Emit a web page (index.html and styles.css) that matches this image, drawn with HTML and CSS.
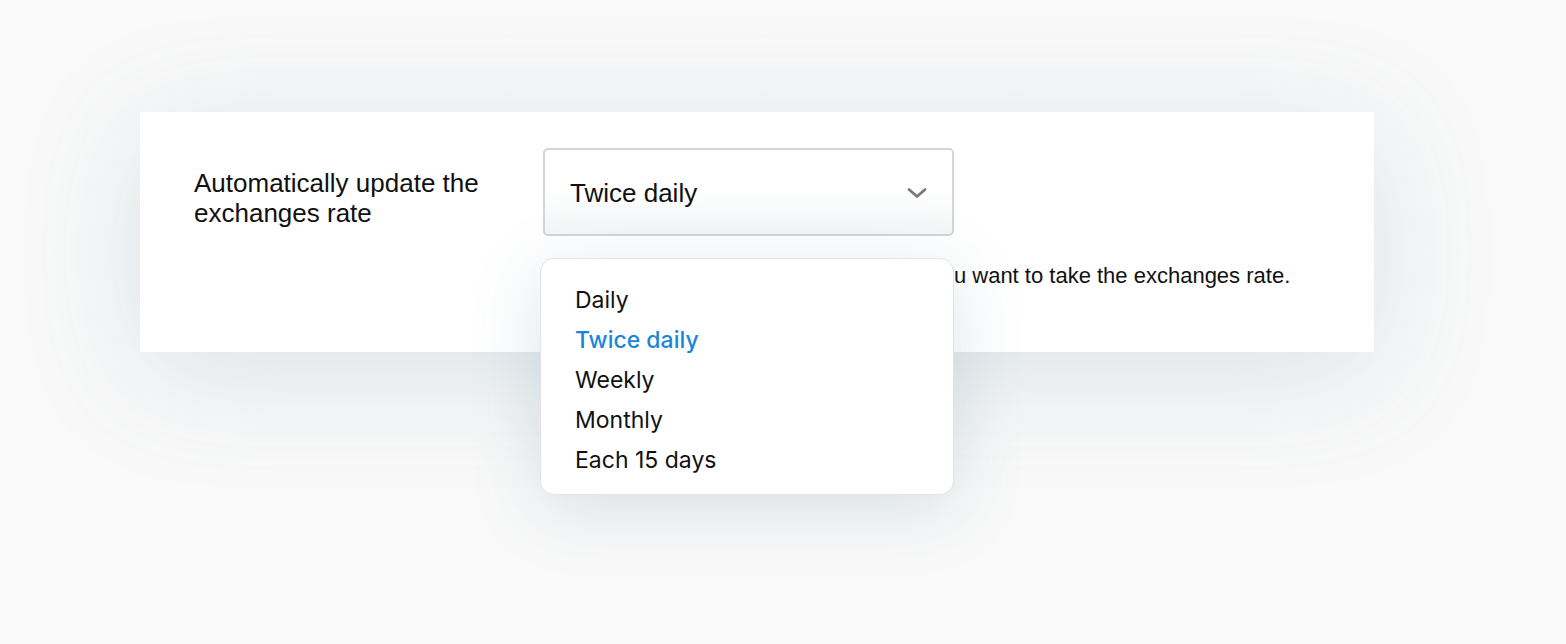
FILE: index.html
```html
<!DOCTYPE html>
<html>
<head>
<meta charset="utf-8">
<link rel="stylesheet" href="styles.css">
</head>
<body>
<div class="page">
  <div class="card">
    <div class="label">Automatically update the<br>exchanges rate</div>
    <div class="field">
      <div class="select-wrap">
        <div class="select">
          <span class="value">Twice daily</span>
          <svg class="chev" width="22" height="14" viewBox="0 0 22 14"><path d="M3 3.5 L11 10.5 L19 3.5" fill="none" stroke="#7a7a7a" stroke-width="2.8" stroke-linecap="round" stroke-linejoin="round"/></svg>
        </div>
        <ul class="menu">
          <li>Daily</li>
          <li class="active">Twice daily</li>
          <li>Weekly</li>
          <li>Monthly</li>
          <li>Each 15 days</li>
        </ul>
      </div>
      <p class="help">Select the update frequency with which you want to take the exchanges rate.</p>
    </div>
  </div>
</div>
</body>
</html>
```
FILE: styles.css
```css
html, body {
  margin: 0;
  padding: 0;
  background: #f9f9f9;
}
.page {
  width: 1566px;
  height: 644px;
  padding: 112px 0 0 140px;
  box-sizing: border-box;
  overflow: hidden;
  font-family: "Liberation Sans", Arial, sans-serif;
}
.card {
  width: 1234px;
  height: 240px;
  box-sizing: border-box;
  background: #fff;
  padding: 36px 0 0 54px;
  display: flex;
  box-shadow: 0 20px 120px rgba(70, 110, 135, 0.17);
}
.label {
  width: 349px;
  padding-top: 20px;
  font-size: 26px;
  line-height: 30px;
  color: #111;
}
.field {
  display: flex;
  flex-direction: column;
}
.select-wrap {
  position: relative;
  width: 411px;
}
.select {
  height: 88px;
  box-sizing: border-box;
  border: 2px solid #d3d5d7;
  border-radius: 5px;
  background: linear-gradient(#ffffff 45%, #f4f6f7);
  display: flex;
  align-items: center;
  justify-content: space-between;
  padding: 0 24px 0 25px;
}
.value {
  font-size: 26px;
  color: #111;
  margin-top: 2px;
}
.chev {
  display: block;
  margin-top: 2px;
}
.menu {
  position: absolute;
  top: 110px;
  left: -3px;
  width: 414px;
  box-sizing: border-box;
  margin: 0;
  list-style: none;
  background: #fff;
  border: 1.5px solid #e3e4e6;
  border-radius: 14px;
  padding: 21px 0 14px 34px;
  box-shadow: 0 14px 70px rgba(70, 110, 135, 0.18);
  font-family: Inter, "Noto Sans", sans-serif;
  z-index: 2;
}
.menu li {
  height: 40px;
  line-height: 40px;
  font-size: 23px;
  color: #111;
}
.menu li.active {
  color: #1b86d6;
  font-weight: 500;
}
.help {
  margin: 27px 0 0 0;
  font-size: 22px;
  line-height: 26px;
  color: #111;
  white-space: nowrap;
}
```
